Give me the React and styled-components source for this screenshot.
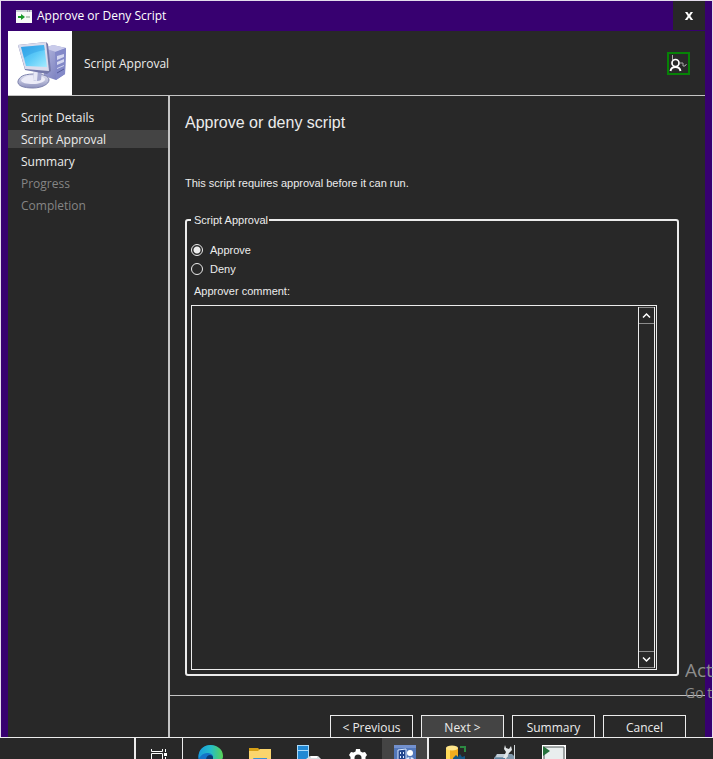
import React, { useState } from "react";
import styled, { createGlobalStyle } from "styled-components";

const ui = '"Open Sans", "Noto Sans", sans-serif';
const classic = '"Liberation Sans", Arial, sans-serif';

const GlobalStyle = createGlobalStyle`
  * { box-sizing: border-box; }
  body { margin: 0; background: #282828; color: #ececec; font: 12px/18px ${ui}; }
  button, textarea, input { font: inherit; color: inherit; margin: 0; }
  svg { display: block; }
`;

const Screen = styled.div`
  position: relative;
  display: flex;
  flex-direction: column;
  height: 100vh;
  overflow: hidden;
`;

const Dialog = styled.div`
  flex: 1;
  min-height: 0;
  display: flex;
  flex-direction: column;
  padding: 0 7px;
  background: #370070;
  border: solid #e4dcec;
  border-width: 1px 1px 0;
  overflow: hidden;
`;

const TitleBar = styled.header`
  flex: none;
  display: flex;
  align-items: center;
  gap: 5px;
  height: 30px;
  padding-left: 8px;
  color: #fff;
`;

const Title = styled.h1`
  flex: 1;
  margin: 0;
  font-size: 12px;
  font-weight: 400;
`;

const CloseButton = styled.button`
  display: grid;
  place-items: center;
  width: 32px;
  height: 29px;
  align-self: flex-start;
  padding: 0;
  border: 0;
  background: #282828;
  color: #fff;
`;

const Banner = styled.div`
  flex: none;
  display: flex;
  align-items: center;
  gap: 12px;
  height: 65px;
  padding-right: 15px;
  background: #282828;
  border-bottom: 1px solid #c4c4c4;
`;

const BannerPicture = styled.div`
  width: 64px;
  height: 64px;
  background: #fff;
`;

const BannerTitle = styled.div`
  flex: 1;
  padding-top: 2px;
`;

const FeedbackButton = styled.button`
  display: flex;
  align-items: flex-start;
  width: 23px;
  height: 23px;
  padding: 0;
  border: 2px solid #068206;
  background: #282828;
`;

const Body = styled.div`
  flex: 1;
  min-height: 0;
  display: flex;
  background: #282828;
`;

const Steps = styled.nav`
  flex: none;
  display: flex;
  flex-direction: column;
  gap: 4px;
  width: 162px;
  padding-top: 12px;
  border-right: 2px solid #c4c4c4;
`;

const Step = styled.a`
  height: 18px;
  padding-left: 13px;
  line-height: 20px;
  text-decoration: none;
  color: ${(p) => (p.$pending ? "#858585" : "#ececec")};
  background: ${(p) => (p.$current ? "#444" : "transparent")};
`;

const Page = styled.main`
  flex: 1;
  min-width: 0;
  display: flex;
  flex-direction: column;
`;

const PageContent = styled.div`
  flex: 1;
  min-height: 0;
  display: flex;
  flex-direction: column;
  padding: 17px 26px 19px 15px;
  font-family: ${classic};
  font-size: 11px;
`;

const PageHeading = styled.h2`
  margin: 0 0 40px;
  font-size: 16px;
  line-height: 20px;
  font-weight: 400;
`;

const Note = styled.p`
  margin: 0 0 19px;
  line-height: 20px;
`;

const Group = styled.fieldset`
  flex: 1;
  min-width: 0;
  min-height: 0;
  display: flex;
  flex-direction: column;
  margin: 0;
  padding: 12px 20px 4px 4px;
  border: 2px solid #ececec;
  border-radius: 3px;
`;

const Legend = styled.legend`
  padding: 0 1px 0 3px;
  line-height: 16px;
`;

const Choice = styled.label`
  display: flex;
  align-items: center;
  gap: 7px;
  height: 19px;
  line-height: 20px;
`;

const Radio = styled.input`
  appearance: none;
  width: 12px;
  height: 12px;
  border: 1px solid #ececec;
  border-radius: 50%;
  &:checked {
    background: radial-gradient(circle, #ececec 3px, transparent 4px);
  }
`;

const FieldLabel = styled.label`
  margin: 4px 0 5px;
  padding-left: 3px;
  line-height: 18px;
`;

const CommentBox = styled.div`
  flex: 1;
  min-height: 0;
  display: flex;
  border: 1px solid #ececec;
`;

const Comment = styled.textarea`
  flex: 1;
  min-width: 0;
  padding: 2px;
  border: 0;
  outline: 0;
  resize: none;
  overflow: hidden;
  background: transparent;
`;

const ScrollBar = styled.div`
  display: flex;
  flex-direction: column;
  justify-content: space-between;
  width: 17px;
  margin: 1px 1px 1px 0;
  border: solid #ececec;
  border-width: 0 1px;
`;

const ScrollButton = styled.button`
  display: grid;
  place-items: center;
  height: 17px;
  padding: 0;
  border: solid #8c8c8c;
  border-width: 1px 0;
  background: transparent;
`;

const Footer = styled.footer`
  flex: none;
  display: flex;
  justify-content: flex-end;
  align-items: flex-start;
  gap: 8px;
  height: 42px;
  padding: 19px 19px 0 0;
  border-top: 1px solid #c4c4c4;
`;

const WizardButton = styled.button`
  flex: none;
  width: 83px;
  height: 26px;
  padding: 0;
  line-height: 22px;
  border: 1px solid #ececec;
  background: ${(p) => (p.$primary ? "#444" : "#282828")};
`;

const Taskbar = styled.nav`
  flex: none;
  display: flex;
  height: 22px;
  padding-left: 134px;
  border-top: 1px solid #ececec;
  background: #282828;
  overflow: hidden;
`;

const TaskButton = styled.button`
  flex: none;
  display: flex;
  justify-content: center;
  align-items: flex-start;
  width: ${(p) => (p.$active ? "47px" : "49px")};
  height: 40px;
  margin-right: ${(p) => (p.$framed ? "3px" : p.$active ? "2px" : "0")};
  padding: 7px 0 0;
  border: 0;
  background: ${(p) => (p.$active ? "#444" : "transparent")};
  border-left: ${(p) => (p.$framed ? "2px solid #ececec" : "0")};
  border-right: ${(p) => (p.$framed ? "1px solid #ececec" : p.$active ? "2px solid #ececec" : "0")};
`;

const Watermark = styled.div`
  position: absolute;
  right: 0;
  bottom: 56px;
  width: 28px;
  overflow: hidden;
  white-space: nowrap;
  pointer-events: none;
  color: #8c8c8c;
  font-size: 14px;
  line-height: 20px;
`;

const WatermarkTitle = styled.div`
  font-size: 19px;
  line-height: 26px;
`;

const ScriptIcon = () => (
  <svg width="16" height="13" viewBox="0 0 16 13">
    <path d="M0 0h16v13H0z" fill="#f7f9f7" />
    <path d="M0 0h16v2H0z" fill="#c9ced6" />
    <path d="M11 1h1M13 1h1" stroke="#667" />
    <path d="M2 7h4" stroke="#189a28" strokeWidth="2" />
    <path d="M5 4l4 3-4 3z" fill="#189a28" />
    <path d="M10 7h4" stroke="#7b9c80" />
  </svg>
);

const CloseIcon = () => (
  <svg width="10" height="10" viewBox="0 0 10 10">
    <path d="M1 1h2.4L5 3.6 6.6 1H9L6.3 4.9 9.2 9H6.7L5 6.4 3.3 9H.8l2.9-4.1z" fill="#fff" />
  </svg>
);

const ComputerPicture = () => (
  <svg width="64" height="64" viewBox="0 0 64 64">
    <defs>
      <linearGradient id="glass" x1="0" y1="0" x2="1" y2="1">
        <stop offset="0" stopColor="#38a8ec" />
        <stop offset=".5" stopColor="#5ccaf8" />
        <stop offset="1" stopColor="#a5ecff" />
      </linearGradient>
      <linearGradient id="tower" x1="0" y1="0" x2="1" y2="1">
        <stop offset="0" stopColor="#b5b8de" />
        <stop offset="1" stopColor="#6c72b8" />
      </linearGradient>
      <linearGradient id="foot" x1="0" y1="0" x2="0" y2="1">
        <stop offset="0" stopColor="#e8e9f5" />
        <stop offset="1" stopColor="#8d91bd" />
      </linearGradient>
    </defs>
    <path d="M36 17l9-3 13 3-1 26-9 6-12-4z" fill="url(#tower)" />
    <path d="M36 17l9-3 13 3-10 4z" fill="#c9cbea" />
    <path d="M47 21l11-4-1 26-9 6z" fill="#8389c8" />
    <path d="M49 25l7-2v3l-7 3zM49 31l7-3v3l-7 3zM49 37l7-3v1l-7 3z" fill="#d4d7f0" />
    <path d="M49 42l7-4" stroke="#535998" />
    <path d="M10 50c2-6 9-7 17-7 8 0 14 2 14 6s-7 8-16 8-16-2-15-7z" fill="url(#foot)" stroke="#7d82ad" />
    <path d="M13 49c3-4 8-5 15-4 6 0 10 2 9 4s-6 4-12 4-12-1-12-4z" fill="#ececf8" />
    <path d="M26 38l8 2-1 9q-4 2-8 0z" fill="#a4a8cf" />
    <path d="M26 38l4 1-1 11-4-1z" fill="#e7e8f5" />
    <path d="M10 14l28-3 2 2 3 27-4 3-22-4z" fill="#7478a9" />
    <path d="M10 14l28-3 3 29-24-2z" fill="#dadced" />
    <path d="M13 16l23-2 3 22-21-1z" fill="url(#glass)" />
    <path d="M13 16l23-2 1 5Q24 21 16 27z" fill="#208fdc" opacity=".35" />
  </svg>
);

const PersonIcon = () => (
  <svg width="19" height="19" viewBox="0 0 19 19" fill="none" stroke="#fff">
    <circle cx="6.500" cy="9" r="3.500" strokeWidth="1.7" />
    <path d="M1.500 17c.5-3 2.200-4 5-4s4.500 1 5 4" strokeWidth="1.9" />
    <path d="M3.500 1v5" stroke="#aaa" />
    <path d="M11 9h3v3h2l1.500-2" stroke="#aaa" />
  </svg>
);

const Chevron = ({ down }) => (
  <svg width="9" height="7" viewBox="0 0 9 7" fill="none" stroke="#fff" strokeWidth="1.5">
    <path d={down ? "M1 1.500l3.500 3.500L8 1.500" : "M1 5.500L4.500 2 8 5.500"} />
  </svg>
);

const TaskViewIcon = () => (
  <svg width="18" height="20" viewBox="0 0 18 20" fill="none" stroke="#fff">
    <path d="M1.500 4v2.500h11V4M1.500 16V8.500h11V16M15.500 4v3M15.500 12v4" />
    <path d="M14 8h3v3h-3z" fill="#fff" stroke="none" />
  </svg>
);

const EdgeIcon = () => (
  <svg width="25" height="25" viewBox="0 0 25 25">
    <defs>
      <linearGradient id="edge" x1="0" y1="0" x2="1" y2="0">
        <stop offset="0" stopColor="#189bdc" />
        <stop offset=".5" stopColor="#25bdc8" />
        <stop offset="1" stopColor="#5ad353" />
      </linearGradient>
    </defs>
    <circle cx="12.500" cy="12" r="12" fill="#1473c8" />
    <path d="M.5 11C1 4 6 0 12.500 0S25 4 25 11q0 5-6 5-5 0-4-4c0-3-3-4-6-4Q4 8 .5 14z" fill="url(#edge)" />
    <path d="M8 15c0-6 6-6 7-3v4H8z" fill="#0a3b70" />
  </svg>
);

const FolderIcon = () => (
  <svg width="22" height="22" viewBox="0 0 22 22">
    <path d="M0 3h9l2 2h11v15H0z" fill="#d6a016" />
    <path d="M0 6h9l2-2h11v16H0z" fill="#fbd56d" />
    <path d="M4 14q0-1 1-1h13v8H4z" fill="#3d91d6" />
  </svg>
);

const ServerIcon = () => (
  <svg width="24" height="22" viewBox="0 0 24 22">
    <path d="M0 0h12v22H0z" fill="#a9dafb" />
    <path d="M1 1h10v4H1zM1 6h10v16H1z" fill="#2289d4" />
    <path d="M9 14l4-3h8l3 3v8H9z" fill="#d8dde0" />
    <path d="M14 12h6" stroke="#fff" strokeWidth="2" />
  </svg>
);

const GearIcon = () => (
  <svg width="18" height="24" viewBox="0 0 18 24">
    <path
      d="M6.500 6.500L7 4h4l.5 2.500 2 1 2.500-.5 2 3-1.500 2v2l1.500 2-2 3-2.500-.5-2 1L11 22H7l-.5-2-2-1-2.500.5-2-3L1.500 14v-2L0 10l2-3 2.500.5z"
      fill="#fff"
    />
    <circle cx="9" cy="13" r="3.500" fill="#282828" />
  </svg>
);

const ConsoleIcon = () => (
  <svg width="22" height="22" viewBox="0 0 22 22">
    <path d="M0 0h22v22H0z" fill="#5277ba" />
    <path d="M0 0h22v3H0z" fill="#7391ce" />
    <path d="M4 5l8-1v18H4z" fill="#23458d" stroke="#d9e8ff" />
    <path d="M6 7h1v2H6zM9 7h1v2H9zM6 11h1v2H6zM9 11h1v2H9z" fill="#d9e8ff" />
    <circle cx="16" cy="8" r="3" fill="#fff" />
    <path d="M11 18q0-6 5-6t5 6z" fill="#dceaff" />
    <path d="M16 12v5" stroke="#345da9" />
  </svg>
);

const DatabaseIcon = () => (
  <svg width="22" height="22" viewBox="0 0 22 22">
    <path d="M1 3v17h12V3z" fill="#f3ad1f" />
    <path d="M1 3v17h4V3z" fill="#ffdb58" />
    <ellipse cx="7" cy="3" rx="6" ry="2.500" fill="#ffe58a" />
    <path d="M15 2h5v5" fill="none" stroke="#2d8a43" strokeWidth="2" />
    <path d="M8 13l3-3 2 2 2-3 2 3 3-1v10H8z" fill="#155786" />
  </svg>
);

const ToolsIcon = () => (
  <svg width="22" height="22" viewBox="0 0 22 22">
    <path d="M0 13l3-4h15l3 3v10H0z" fill="#8098ab" />
    <path d="M3 9h11v3H2z" fill="#c2ced8" />
    <path d="M11 0l1 3 3 1 2-3 1 4-3 3-3 6-3-1 3-6-2-3z" fill="#e2e6e8" />
    <path d="M20.500 0v15" stroke="#d3d8db" />
    <path d="M1 13h10v9H1z" fill="#587f9c" />
  </svg>
);

const RunIcon = () => (
  <svg width="24" height="22" viewBox="0 0 24 22">
    <path d="M0 0h24v22H0z" fill="#fff" />
    <path d="M2 2h20v20H2z" fill="#e9eeee" stroke="#4c5554" />
    <path d="M1 1l7 5-7 5z" fill="#26713c" />
  </svg>
);

const steps = [
  { name: "Script Details" },
  { name: "Script Approval", current: true },
  { name: "Summary" },
  { name: "Progress", pending: true },
  { name: "Completion", pending: true },
];

const tasks = [
  { name: "Task View", Icon: TaskViewIcon, framed: true },
  { name: "Microsoft Edge", Icon: EdgeIcon },
  { name: "File Explorer", Icon: FolderIcon },
  { name: "Server Manager", Icon: ServerIcon },
  { name: "Settings", Icon: GearIcon },
  { name: "Configuration Manager", Icon: ConsoleIcon, active: true },
  { name: "Database", Icon: DatabaseIcon },
  { name: "Tools", Icon: ToolsIcon },
  { name: "Run", Icon: RunIcon },
];

export default function App() {
  const [decision, setDecision] = useState("Approve");
  return (
    <Screen>
      <GlobalStyle />
      <Dialog>
        <TitleBar>
          <ScriptIcon />
          <Title>Approve or Deny Script</Title>
          <CloseButton aria-label="Close"><CloseIcon /></CloseButton>
        </TitleBar>
        <Banner>
          <BannerPicture><ComputerPicture /></BannerPicture>
          <BannerTitle>Script Approval</BannerTitle>
          <FeedbackButton aria-label="Feedback"><PersonIcon /></FeedbackButton>
        </Banner>
        <Body>
          <Steps>
            {steps.map((s) => (
              <Step key={s.name} href="#" $current={s.current} $pending={s.pending}>{s.name}</Step>
            ))}
          </Steps>
          <Page>
            <PageContent>
              <PageHeading>Approve or deny script</PageHeading>
              <Note>This script requires approval before it can run.</Note>
              <Group>
                <Legend>Script Approval</Legend>
                {["Approve", "Deny"].map((d) => (
                  <Choice key={d}>
                    <Radio type="radio" name="decision" checked={decision === d} onChange={() => setDecision(d)} />
                    {d}
                  </Choice>
                ))}
                <FieldLabel htmlFor="comment">Approver comment:</FieldLabel>
                <CommentBox>
                  <Comment id="comment" />
                  <ScrollBar>
                    <ScrollButton aria-label="Scroll up"><Chevron /></ScrollButton>
                    <ScrollButton aria-label="Scroll down"><Chevron down /></ScrollButton>
                  </ScrollBar>
                </CommentBox>
              </Group>
            </PageContent>
            <Footer>
              <WizardButton>&lt; Previous</WizardButton>
              <WizardButton $primary>Next &gt;</WizardButton>
              <WizardButton>Summary</WizardButton>
              <WizardButton>Cancel</WizardButton>
            </Footer>
          </Page>
        </Body>
      </Dialog>
      <Taskbar>
        {tasks.map(({ name, Icon, framed, active }) => (
          <TaskButton key={name} aria-label={name} $framed={framed} $active={active}><Icon /></TaskButton>
        ))}
      </Taskbar>
      <Watermark>
        <WatermarkTitle>Act</WatermarkTitle>
        Go t
      </Watermark>
    </Screen>
  );
}
